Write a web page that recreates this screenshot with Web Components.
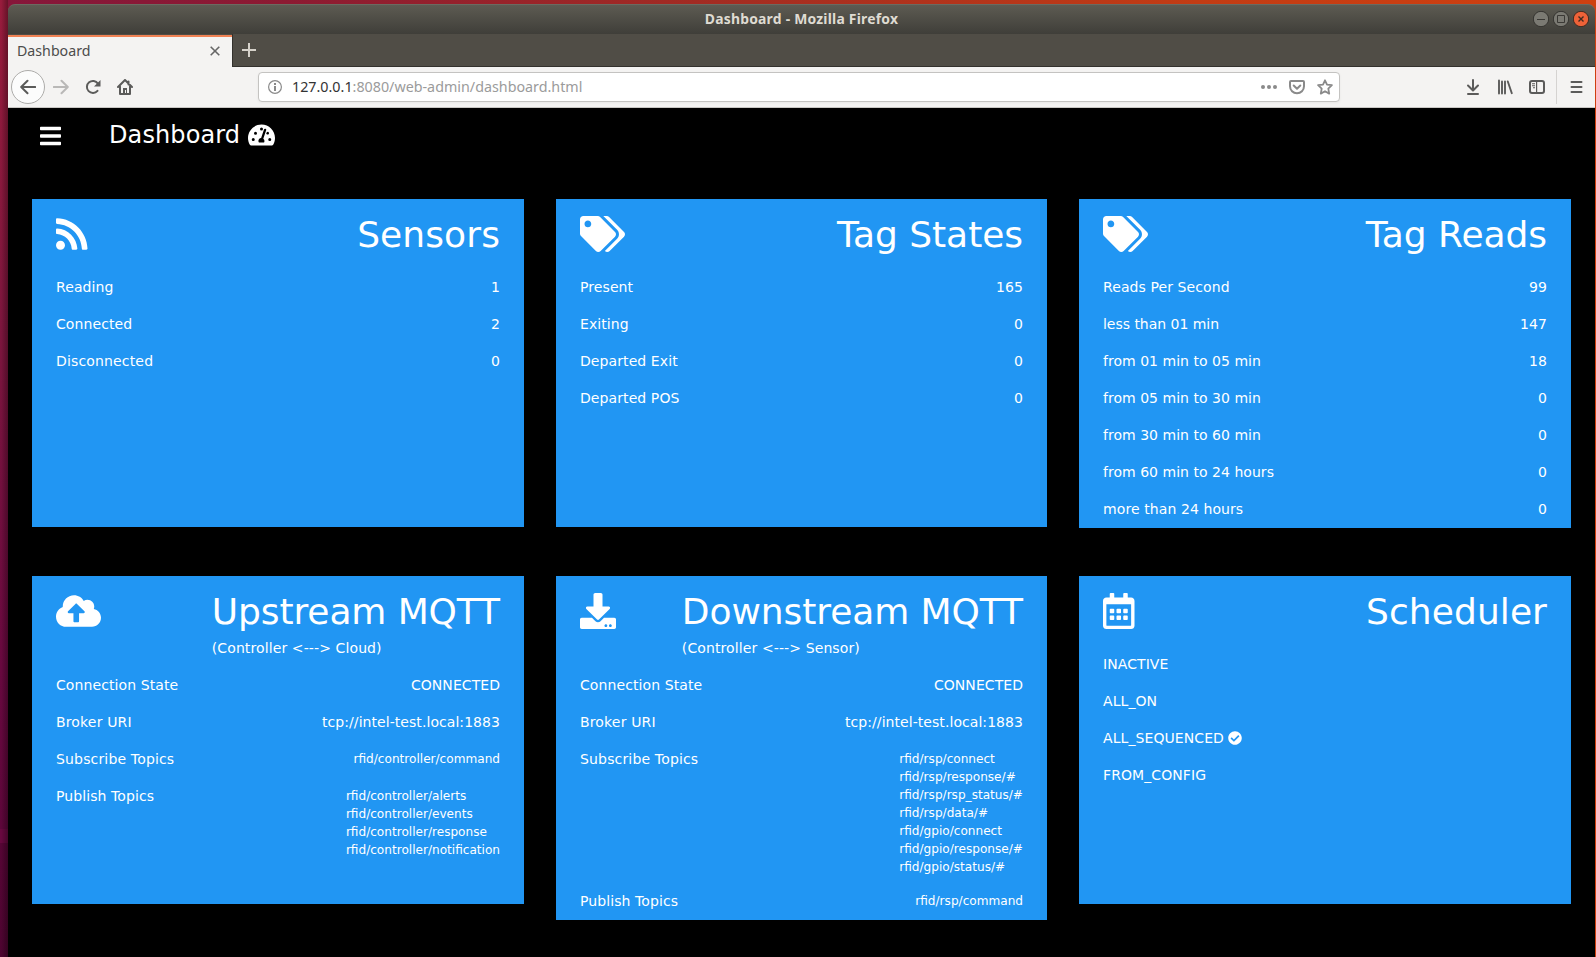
<!DOCTYPE html>
<html lang="en"><head><meta charset="utf-8"><title>Dashboard</title>
<style>
html,body{margin:0;height:100%;overflow:hidden}
body{font-family:"DejaVu Sans",Verdana,sans-serif;background:linear-gradient(90deg,#86163a 0,#8c1a32 18%,#a32c22 45%,#c23c14 75%,#cf4010 100%)}
</style></head><body>
<desktop-window></desktop-window>
<script>
const ICONS={
rss:['0 0 448 512','<path d="M128.081 415.959c0 35.369-28.672 64.041-64.041 64.041S0 451.328 0 415.959s28.672-64.041 64.041-64.041 64.040 28.673 64.040 64.041zm175.660 47.250c-8.354-154.600-132.185-278.587-286.950-286.950C7.656 175.765 0 183.105 0 192.253v48.069c0 8.415 6.490 15.472 14.887 16.018 111.832 7.284 201.473 96.702 208.772 208.772.547 8.397 7.604 14.887 16.018 14.887h48.069c9.149.001 16.489-7.655 15.995-16.790zm144.249.288C439.596 229.677 251.465 40.445 16.503 32.010 7.473 31.686 0 38.981 0 48.016v48.068c0 8.625 6.835 15.645 15.453 15.999 191.179 7.839 344.627 161.316 352.465 352.465.353 8.618 7.373 15.453 15.999 15.453h48.068c9.034-.001 16.329-7.474 16.005-16.504z"/>'],
tags:['0 0 640 512','<path d="M497.941 225.941L286.059 14.059A48 48 0 0 0 252.118 0H48C21.490 0 0 21.490 0 48v204.118a48 48 0 0 0 14.059 33.941l211.882 211.882c18.744 18.745 49.136 18.746 67.882 0l204.118-204.118c18.745-18.745 18.745-49.137 0-67.882zM112 160c-26.510 0-48-21.490-48-48s21.490-48 48-48 48 21.490 48 48-21.490 48-48 48zm513.941 133.823L421.823 497.941c-18.745 18.745-49.137 18.745-67.882 0l-.360-.360L527.640 323.522c16.999-16.999 26.360-39.600 26.360-63.640s-9.362-46.641-26.360-63.640L331.397 0h48.721a48 48 0 0 1 33.941 14.059l211.882 211.882c18.745 18.745 18.745 49.137 0 67.882z"/>'],
cloud:['0 0 640 512','<path d="M537.600 226.600c4.100-10.700 6.400-22.400 6.400-34.600 0-53-43-96-96-96-19.700 0-38.100 6-53.300 16.200C367 64.200 315.300 32 256 32c-88.400 0-160 71.600-160 160 0 2.700.1 5.400.2 8.100C40.200 219.800 0 273.200 0 336c0 79.500 64.500 144 144 144h368c70.700 0 128-57.300 128-128 0-61.900-44-113.600-102.400-125.400zM393.400 288H328v112c0 8.800-7.200 16-16 16h-48c-8.800 0-16-7.200-16-16V288h-65.400c-14.300 0-21.400-17.200-11.300-27.300l105.400-105.400c6.200-6.200 16.400-6.200 22.600 0l105.400 105.400c10.100 10.100 2.900 27.300-11.300 27.300z"/>'],
download:['0 0 512 512','<path d="M216 0h80c13.300 0 24 10.700 24 24v168h87.700c17.800 0 26.700 21.500 14.100 34.100L269.700 378.300c-7.500 7.500-19.800 7.500-27.300 0L90.100 226.100c-12.600-12.600-3.700-34.100 14.100-34.100H192V24c0-13.300 10.700-24 24-24zm296 376v112c0 13.300-10.700 24-24 24H24c-13.300 0-24-10.700-24-24V376c0-13.300 10.700-24 24-24h146.700l49 49c20.100 20.100 52.500 20.100 72.600 0l49-49H488c13.300 0 24 10.700 24 24zm-124 88c0-11-9-20-20-20s-20 9-20 20 9 20 20 20 20-9 20-20zm64 0c0-11-9-20-20-20s-20 9-20 20 9 20 20 20 20-9 20-20z"/>'],
calendar:['0 0 448 512','<path d="M148 288h-40c-6.600 0-12-5.400-12-12v-40c0-6.600 5.400-12 12-12h40c6.600 0 12 5.400 12 12v40c0 6.600-5.400 12-12 12zm108-12v-40c0-6.600-5.400-12-12-12h-40c-6.600 0-12 5.400-12 12v40c0 6.600 5.400 12 12 12h40c6.600 0 12-5.400 12-12zm96 0v-40c0-6.600-5.400-12-12-12h-40c-6.600 0-12 5.400-12 12v40c0 6.600 5.400 12 12 12h40c6.600 0 12-5.400 12-12zm-96 96v-40c0-6.600-5.400-12-12-12h-40c-6.600 0-12 5.400-12 12v40c0 6.600 5.400 12 12 12h40c6.600 0 12-5.400 12-12zm-96 0v-40c0-6.600-5.400-12-12-12h-40c-6.600 0-12 5.400-12 12v40c0 6.600 5.400 12 12 12h40c6.600 0 12-5.400 12-12zm192 0v-40c0-6.600-5.400-12-12-12h-40c-6.600 0-12 5.400-12 12v40c0 6.600 5.400 12 12 12h40c6.600 0 12-5.400 12-12zm96-260v352c0 26.500-21.500 48-48 48H48c-26.500 0-48-21.500-48-48V112c0-26.500 21.500-48 48-48h48V12c0-6.600 5.400-12 12-12h40c6.600 0 12 5.400 12 12v52h128V12c0-6.600 5.400-12 12-12h40c6.600 0 12 5.400 12 12v52h48c26.500 0 48 21.500 48 48zm-48 346V160H48v298c0 3.300 2.700 6 6 6h340c3.300 0 6-2.700 6-6z"/>'],
check:['0 0 512 512','<path d="M504 256c0 136.967-111.033 248-248 248S8 392.967 8 256 119.033 8 256 8s248 111.033 248 248zM227.314 387.314l184-184c6.248-6.248 6.248-16.379 0-22.627l-22.627-22.627c-6.248-6.249-16.379-6.249-22.628 0L216 308.118l-70.059-70.059c-6.248-6.248-16.379-6.248-22.628 0l-22.627 22.627c-6.248 6.248-6.248 16.379 0 22.627l104 104c6.249 6.249 16.379 6.249 22.628.001z"/>'],
gauge:['0 0 576 512','<path fill-rule="evenodd" d="M288 32C128.940 32 0 160.940 0 320c0 52.800 14.250 102.260 39.060 144.800 5.610 9.620 16.300 15.200 27.440 15.200h443c11.140 0 21.830-5.580 27.440-15.200C561.750 422.260 576 372.800 576 320c0-159.060-128.940-288-288-288zM144 352a32 32 0 1 1-64 0 32 32 0 0 1 64 0zm48-136a32 32 0 1 1-64 0 32 32 0 0 1 64 0zm128-88a32 32 0 1 1-64 0 32 32 0 0 1 64 0zm176 224a32 32 0 1 1-64 0 32 32 0 0 1 64 0zm-48-136a32 32 0 0 1-60 15l12-35a32 32 0 0 1 48 20zM343 416H233c-26-34-4-91 47-96l61-181c11-30 58-16 46 15l-61 181c25 18 32 53 17 81z"/>'],
bars:['0 0 448 512','<path d="M16 132h416c8.837 0 16-7.163 16-16V76c0-8.837-7.163-16-16-16H16C7.163 60 0 67.163 0 76v40c0 8.837 7.163 16 16 16zm0 160h416c8.837 0 16-7.163 16-16v-40c0-8.837-7.163-16-16-16H16c-8.837 0-16 7.163-16 16v40c0 8.837 7.163 16 16 16zm0 160h416c8.837 0 16-7.163 16-16v-40c0-8.837-7.163-16-16-16H16c-8.837 0-16 7.163-16 16v40c0 8.837 7.163 16 16 16z"/>'],
close:['0 0 10 10','<path d="M.7.7l8.600 8.600M9.300.7L.7 9.300" fill="none" stroke="currentColor" stroke-width="1.600"/>'],
plus:['0 0 14 14','<path d="M7 0v14M0 7h14" fill="none" stroke="currentColor" stroke-width="2"/>'],
back:['0 0 16 16','<path d="M15.300 8H1.500M7.500 1.700L1.200 8l6.300 6.300" fill="none" stroke="currentColor" stroke-width="2" stroke-linecap="round" stroke-linejoin="round"/>'],
forward:['0 0 16 16','<path d="M.7 8h13.800M8.500 1.700L14.800 8l-6.300 6.300" fill="none" stroke="currentColor" stroke-width="2" stroke-linecap="round" stroke-linejoin="round"/>'],
reload:['0 0 16 16','<path d="M12.500 11.800a6 6 0 1 1 .4-7.200" fill="none" stroke="currentColor" stroke-width="2" stroke-linecap="round"/><path d="M15.500 1v6.500H9z"/>'],
home:['0 0 16 16','<path d="M1 8l7-7 7 7M3 7.500V15h10V7.500M11.500 2.500v3" fill="none" stroke="currentColor" stroke-width="2" stroke-linecap="round" stroke-linejoin="round"/><path d="M6 14V9h4v5H9v-3H8v3z"/>'],
info:['0 0 14 14','<circle cx="7" cy="7" r="6.400" fill="none" stroke="currentColor" stroke-width="1.200"/><path d="M6 6h2v5H6zM6 3h2v2H6z"/>'],
dots:['0 0 16 16','<circle cx="2" cy="8" r="2"/><circle cx="8" cy="8" r="2"/><circle cx="14" cy="8" r="2"/>'],
pocket:['0 0 16 16','<path d="M2 2h12c.6 0 1 .4 1 1v4.300a7 7 0 0 1-14 0V3c0-.6.4-1 1-1zM4.700 6.500L8 9.700l3.300-3.200" fill="none" stroke="currentColor" stroke-width="2" stroke-linecap="round" stroke-linejoin="round"/>'],
star:['0 0 16 16','<path d="M8 1.300l2 4.300 4.900.6-3.600 3.400.9 5L8 12.200l-4.200 2.400.9-5L1.100 6.200 6 5.600z" fill="none" stroke="currentColor" stroke-width="1.800" stroke-linejoin="round"/>'],
save:['0 0 16 16','<path d="M8 1v10M3 6.500l5 5 5-5M3 15h10" fill="none" stroke="currentColor" stroke-width="2" stroke-linecap="round" stroke-linejoin="round"/>'],
library:['0 0 16 16','<path d="M2 1.500v13M5 2.500v12M8 2.500v12M10.800 2.500l4 11.700" fill="none" stroke="currentColor" stroke-width="1.900" stroke-linecap="round"/>'],
sidebar:['0 0 16 16','<rect x="1" y="2" width="14" height="12" rx="2" fill="none" stroke="currentColor" stroke-width="2"/><path d="M7 2h1.200v12H7zM3 4.200h3v1H3zM3 6.200h3v1H3zM4 8.200h2v1H4z"/>'],
menu:['0 0 14 14','<path d="M1.500 2h10M1.500 7h10M1.500 12h10" fill="none" stroke="currentColor" stroke-width="2" stroke-linecap="round"/>']
};
function define(name,html,extra){
  const t=document.createElement('template');t.innerHTML=html;
  customElements.define(name,class extends HTMLElement{
    constructor(){super();this.attachShadow({mode:'open'}).append(t.content.cloneNode(true))}
    connectedCallback(){if(extra)extra.call(this,this.shadowRoot)}
  });
}
define('ui-icon','<style>:host{display:inline-block;flex:none}svg{display:block;width:100%;height:100%}</style><svg fill="currentColor"></svg>',function(r){
  const [box,body]=ICONS[this.getAttribute('name')];const s=r.querySelector('svg');s.setAttribute('viewBox',box);s.innerHTML=body;
});
define('title-bar',`<style>
:host{display:grid;grid-template-columns:1fr auto 1fr;align-items:center;height:30px;box-sizing:border-box;padding-bottom:2px;background:linear-gradient(#5d5b52,#3f3e39);border-top:1px solid #6b6a61;border-radius:7px 7px 0 0;color:#dfdbd2}
b{grid-column:2;font:bold 13.900px/20px "Noto Sans",sans-serif;letter-spacing:.23px}
.c{justify-self:end;display:flex;gap:4px;padding-right:6px}
svg{display:block;width:16px;height:16px}
</style><b><slot></slot></b><div class="c">
<svg viewBox="0 0 16 16"><circle cx="8" cy="8" r="7.700" fill="#7b7a73" stroke="#34332f"/><path d="M4 8.500h8" stroke="#3a3935"/></svg>
<svg viewBox="0 0 16 16"><circle cx="8" cy="8" r="7.700" fill="#7b7a73" stroke="#34332f"/><path d="M4.500 4.500h7v7h-7z" fill="none" stroke="#3a3935"/></svg>
<svg viewBox="0 0 16 16"><circle cx="8" cy="8" r="7.700" fill="#ee6238" stroke="#3b2b22"/><path d="M5.500 5.500l5 5m0-5l-5 5" stroke="#3e2a20" stroke-width="1.400"/></svg></div>`);
define('tab-strip',`<style>
:host{display:flex;height:33px;background:#504d46}
.tab{display:flex;align-items:center;justify-content:space-between;box-sizing:border-box;width:224px;margin-top:1px;padding:0 12px 2px 9px;border-top:2px solid #f08254;background:#f4f3f2;color:#4c4c4c;font:14.200px/20px "Noto Sans",sans-serif}
.tab ui-icon{width:10px;height:10px;color:#666}
.rest{flex:1;border-left:1px solid #33312d;border-bottom:1px solid #33312d;display:flex;align-items:center;padding-left:9px;color:#d6d2ca}
.rest ui-icon{width:14px;height:14px}
</style><div class="tab"><slot></slot><ui-icon name="close"></ui-icon></div><div class="rest"><ui-icon name="plus"></ui-icon></div>`);
define('nav-bar',`<style>
:host{display:flex;align-items:center;box-sizing:border-box;height:41px;background:#f4f3f2;border-bottom:1px solid #c9c7c4;padding:0 11px 1px 3px;color:#5b5b5a}
ui-icon{width:16px;height:16px}
.back{flex:none;display:flex;align-items:center;justify-content:center;width:32px;height:32px;border:1px solid #adacaa;border-radius:50%;background:#fcfcfc}
.back+ui-icon{color:#b9b8b7;margin-left:8px}
.url{flex:none;display:flex;align-items:center;box-sizing:border-box;width:1082px;height:30px;margin:0 auto 0 125px;border:1px solid #c4c3c1;border-radius:4px;background:#fff;box-shadow:0 1px 3px #0000000d;padding:0 6px 0 9px;color:#8a8a8a}
.url ui-icon:first-child{width:14px;height:14px}
.addr{flex:1;margin-left:10px;padding-top:1px;font:14.300px/20px "Noto Sans",sans-serif;color:#9b9b9b}
.addr span{color:#333}
.sep{width:1px;height:34px;background:#d5d3d1;margin:0 13px 0 11px}
</style>
<div class="back"><ui-icon name="back"></ui-icon></div><ui-icon name="forward"></ui-icon>
<ui-icon name="reload" style="margin-left:16px"></ui-icon><ui-icon name="home" style="margin-left:16px"></ui-icon>
<div class="url"><ui-icon name="info"></ui-icon><div class="addr"><span>127.0.0.1</span>:8080/web-admin/dashboard.html</div>
<ui-icon name="dots"></ui-icon><ui-icon name="pocket" style="margin-left:12px"></ui-icon><ui-icon name="star" style="margin-left:12px"></ui-icon></div>
<ui-icon name="save"></ui-icon><ui-icon name="library" style="margin-left:16px"></ui-icon><ui-icon name="sidebar" style="margin-left:16px"></ui-icon><div class="sep"></div><ui-icon name="menu" style="width:14px;height:14px"></ui-icon>`);
define('page-header',`<style>
:host{display:flex;align-items:center;height:54px;padding-left:32px;color:#fff;font-size:24px;line-height:36px;letter-spacing:.1px}
.m{width:21px;height:24px;margin:2px 48px 0 0}.g{width:27px;height:24px;margin:0 0 1px 8px}
</style><ui-icon class="m" name="bars"></ui-icon><slot></slot><ui-icon class="g" name="gauge"></ui-icon>`);
define('stat-card',`<style>
:host{display:block;box-sizing:border-box;min-height:328px;background:#2196f3;color:#fff;padding:0 24px;font-size:14px;line-height:21px}
header{display:flex;justify-content:space-between;padding-top:8px}
.i{display:flex;align-items:center;height:53px}
h2{margin:0;padding-top:1px;font-weight:400;font-size:36px;line-height:53px;letter-spacing:var(--track,0)}
.s{letter-spacing:.11px}
.rows{padding-top:8px}
</style><header><div class="i"></div><div><h2></h2><div class="s"></div></div></header><div class="rows"><slot></slot></div>`,function(r){
  const i=document.createElement('ui-icon'),n=this.getAttribute('icon');i.setAttribute('name',n);
  const w=+ICONS[n][0].split(' ')[2];i.style.cssText='height:36px;width:'+(w*36/512)+'px';
  r.querySelector('.i').replaceChildren(i);
  r.querySelector('h2').textContent=this.getAttribute('heading');r.querySelector('.s').textContent=this.getAttribute('sub')||'';
});
define('stat-row',`<style>
:host{display:flex;justify-content:space-between;padding:8px 0}
.k{letter-spacing:.09px}
.v{white-space:pre-line;letter-spacing:.06px}
:host([small]) .v{font-size:12.100px;line-height:18px;letter-spacing:0;padding-top:1px;margin-bottom:-1px}
</style><span class="k"></span><div class="v"><slot></slot></div>`,function(r){
  const k=r.querySelector('.k'),l=this.getAttribute('label');k.textContent=l;
  if(/^from/.test(l))k.style.letterSpacing='.03px';
  else if(/^less/.test(l))k.style.letterSpacing='-.03px';
  else if(/^Sub|URI|^Disc/.test(l))k.style.letterSpacing='.16px';
});
define('mode-row',`<style>:host{display:flex;align-items:center;gap:4px;padding:8px 0;letter-spacing:.08px}ui-icon{width:14px;height:14px;margin-bottom:2px}:host(:not([on])) ui-icon{display:none}</style><slot></slot><ui-icon name="check"></ui-icon>`);
define('dash-page',`<style>
:host{display:block;flex:1;background:#000}
.g{display:grid;grid-template-columns:492px 491px 492px;grid-template-rows:329px auto;column-gap:32px;row-gap:48px;align-items:start;padding:37px 24px 0}
</style><page-header>Dashboard</page-header><div class="g">
<stat-card style="--track:.1px" icon="rss" heading="Sensors"><stat-row label="Reading">1</stat-row><stat-row label="Connected">2</stat-row><stat-row label="Disconnected">0</stat-row></stat-card>
<stat-card style="--track:-.05px" icon="tags" heading="Tag States"><stat-row label="Present">165</stat-row><stat-row label="Exiting">0</stat-row><stat-row label="Departed Exit">0</stat-row><stat-row label="Departed POS">0</stat-row></stat-card>
<stat-card style="--track:-.05px" icon="tags" heading="Tag Reads"><stat-row label="Reads Per Second">99</stat-row><stat-row label="less than 01 min">147</stat-row><stat-row label="from 01 min to 05 min">18</stat-row><stat-row label="from 05 min to 30 min">0</stat-row><stat-row label="from 30 min to 60 min">0</stat-row><stat-row label="from 60 min to 24 hours">0</stat-row><stat-row label="more than 24 hours">0</stat-row></stat-card>
<stat-card style="--track:-.1px" icon="cloud" heading="Upstream MQTT" sub="(Controller &lt;---&gt; Cloud)"><stat-row label="Connection State">CONNECTED</stat-row><stat-row label="Broker URI">tcp://intel-test.local:1883</stat-row><stat-row small label="Subscribe Topics">rfid/controller/command</stat-row><stat-row small label="Publish Topics">rfid/controller/alerts
rfid/controller/events
rfid/controller/response
rfid/controller/notification</stat-row></stat-card>
<stat-card style="--track:-.08px" icon="download" heading="Downstream MQTT" sub="(Controller &lt;---&gt; Sensor)"><stat-row label="Connection State">CONNECTED</stat-row><stat-row label="Broker URI">tcp://intel-test.local:1883</stat-row><stat-row small label="Subscribe Topics">rfid/rsp/connect
rfid/rsp/response/#
rfid/rsp/rsp_status/#
rfid/rsp/data/#
rfid/gpio/connect
rfid/gpio/response/#
rfid/gpio/status/#</stat-row><stat-row small label="Publish Topics">rfid/rsp/command</stat-row></stat-card>
<stat-card style="--track:.08px" icon="calendar" heading="Scheduler"><mode-row>INACTIVE</mode-row><mode-row>ALL_ON</mode-row><mode-row on>ALL_SEQUENCED</mode-row><mode-row>FROM_CONFIG</mode-row></stat-card>
</div>`);
define('desktop-window',`<style>
:host{display:flex;box-sizing:border-box;height:957px;padding:4px 1px 0 8px;
background:linear-gradient(270deg,#0005,#0000 7px) 0 0/8px 100% no-repeat,linear-gradient(#981c3c,#7c153d 35%,#68083f 70%,#5d063a 829px,#68083f 829px,#68083f 843px,#560535 843px,#4d0430) 0 0/8px 100% no-repeat}
.l{flex:1;min-width:0;display:flex;flex-direction:column}
</style><div class="l"><title-bar>Dashboard - Mozilla Firefox</title-bar><tab-strip>Dashboard</tab-strip><nav-bar></nav-bar><dash-page></dash-page></div>`);
</script></body></html>
